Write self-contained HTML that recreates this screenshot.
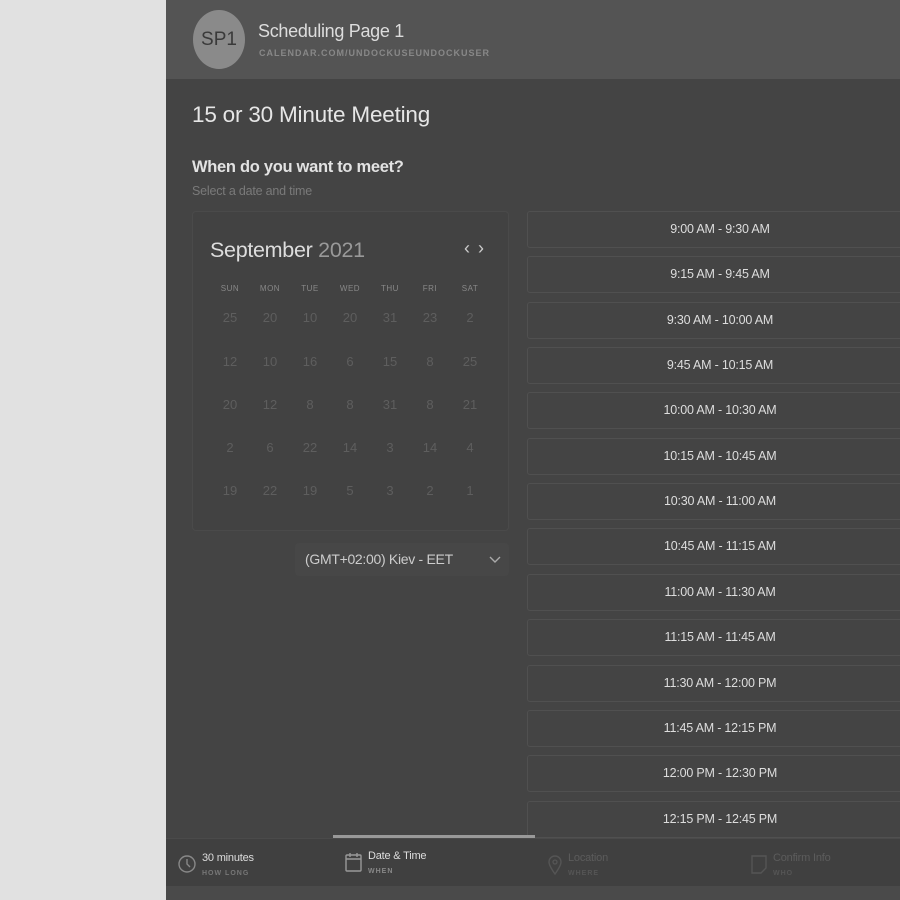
<!DOCTYPE html>
<html><head><style>
*{margin:0;padding:0;box-sizing:border-box}
body{width:900px;height:900px;overflow:hidden;background:#e1e1e1;font-family:"Liberation Sans","DejaVu Sans",sans-serif;position:relative}
#main{position:absolute;left:166px;top:0;width:734px;height:900px;background:#444;overflow:hidden}
#hdr{position:absolute;left:0;top:0;width:734px;height:79px;background:#545454}
.av{position:absolute;left:27px;top:10px;width:52px;height:59px;border-radius:50%;background:#8a8a8a;color:#3a3a3a;font-size:19px;line-height:59px;text-align:center}
.t1{position:absolute;left:92px;top:21px;color:#ddd;font-size:18px;letter-spacing:-0.3px}
.t2{position:absolute;left:93px;top:48px;color:#888;font-size:9px;letter-spacing:1px;font-weight:bold}
.h1{position:absolute;left:26px;top:102px;color:#e6e6e6;font-size:22.5px;letter-spacing:-0.2px}
.h2{position:absolute;left:26px;top:158px;color:#e2e2e2;font-size:16.5px;font-weight:bold;letter-spacing:-0.3px}
.h3{position:absolute;left:26px;top:184px;color:#7a7a7a;font-size:12.5px;letter-spacing:-0.2px}
#cal{position:absolute;left:26px;top:211px;width:317px;height:320px;background:#424242;border:1px solid #4a4a4a;border-radius:4px}
.mon{position:absolute;left:17px;top:26px;font-size:21.5px;color:#ddd;letter-spacing:-0.3px}
.mon span{color:#999}
.nav{position:absolute;right:16px;top:26px;color:#ccc;font-size:18px;letter-spacing:8px}
.grid{position:absolute;left:17px;top:72px;width:280px}
.row{display:flex}
.row div{width:40.3px;text-align:center}
.dh div{font-size:8px;color:#888;letter-spacing:.5px}
.dr{height:43px;font-size:13px;color:#5e5e5e;line-height:0;padding-top:37px}
#tz{position:absolute;left:129px;top:543px;width:214px;height:33px;background:#474747;border-radius:4px;color:#ccc;font-size:14px;line-height:33px;padding-left:10px;letter-spacing:-0.3px}
#tz svg{position:absolute;right:8px;top:13px}
.slot{position:absolute;left:361px;width:390px;height:37px;background:#444;border:1px solid #505050;border-radius:3px;color:#ddd;font-size:12.5px;text-align:center;line-height:35px;padding-right:4px;letter-spacing:-0.2px}
#bar{position:absolute;left:167px;top:835px;width:202px;height:3px;background:#999}
#foot{position:absolute;left:0;top:838px;width:734px;height:48px;background:#404040;border-top:1px solid #4a4a4a}
#strip{position:absolute;left:0;top:886px;width:734px;height:14px;background:#4a4a4a}
.fi{position:absolute;top:0}
.fi b{position:absolute;top:13px;font-weight:normal;font-size:11px;white-space:nowrap;letter-spacing:-0.2px}
.fi i{position:absolute;top:31px;font-style:normal;font-size:7px;font-weight:bold;letter-spacing:1px;white-space:nowrap}
</style></head><body>
<div id="main">
<div id="hdr"><div class="av">SP1</div><div class="t1">Scheduling Page 1</div><div class="t2">CALENDAR.COM/UNDOCKUSEUNDOCKUSER</div></div>
<div class="h1">15 or 30 Minute Meeting</div>
<div class="h2">When do you want to meet?</div>
<div class="h3">Select a date and time</div>
<div id="cal">
<div class="mon">September <span>2021</span></div>
<div class="nav">‹›</div>
<div class="grid">
<div class="row dh"><div>SUN</div><div>MON</div><div>TUE</div><div>WED</div><div>THU</div><div>FRI</div><div>SAT</div></div>
<div class="row dr" style="height:32px;padding-top:25px"><div>25</div><div>20</div><div>10</div><div>20</div><div>31</div><div>23</div><div>2</div></div>
<div class="row dr"><div>12</div><div>10</div><div>16</div><div>6</div><div>15</div><div>8</div><div>25</div></div>
<div class="row dr"><div>20</div><div>12</div><div>8</div><div>8</div><div>31</div><div>8</div><div>21</div></div>
<div class="row dr"><div>2</div><div>6</div><div>22</div><div>14</div><div>3</div><div>14</div><div>4</div></div>
<div class="row dr"><div>19</div><div>22</div><div>19</div><div>5</div><div>3</div><div>2</div><div>1</div></div>
</div></div>
<div id="tz">(GMT+02:00) Kiev - EET<svg width="12" height="8" viewBox="0 0 12 8"><path d="M1 1l5 5 5-5" stroke="#aaa" stroke-width="1.4" fill="none"/></svg></div>
<div class="slot" style="top:211px">9:00 AM - 9:30 AM</div>
<div class="slot" style="top:256px">9:15 AM - 9:45 AM</div>
<div class="slot" style="top:302px">9:30 AM - 10:00 AM</div>
<div class="slot" style="top:347px">9:45 AM - 10:15 AM</div>
<div class="slot" style="top:392px">10:00 AM - 10:30 AM</div>
<div class="slot" style="top:438px">10:15 AM - 10:45 AM</div>
<div class="slot" style="top:483px">10:30 AM - 11:00 AM</div>
<div class="slot" style="top:528px">10:45 AM - 11:15 AM</div>
<div class="slot" style="top:574px">11:00 AM - 11:30 AM</div>
<div class="slot" style="top:619px">11:15 AM - 11:45 AM</div>
<div class="slot" style="top:665px">11:30 AM - 12:00 PM</div>
<div class="slot" style="top:710px">11:45 AM - 12:15 PM</div>
<div class="slot" style="top:755px">12:00 PM - 12:30 PM</div>
<div class="slot" style="top:801px">12:15 PM - 12:45 PM</div>
<div id="bar"></div>
<div id="foot">
<div class="fi" style="left:12px"><svg style="position:absolute;top:15px" width="18" height="20" viewBox="0 0 18 20"><circle cx="9" cy="10" r="8" stroke="#888" stroke-width="1.4" fill="none"/><path d="M9 5v5l3 3" stroke="#888" stroke-width="1.4" fill="none"/></svg><b style="left:24px;color:#ddd">30 minutes</b><i style="left:24px;color:#777">HOW LONG</i></div>
<div class="fi" style="left:179px"><svg style="position:absolute;top:13px" width="17" height="20" viewBox="0 0 17 20"><rect x="1" y="3" width="15" height="16" rx="1" stroke="#999" stroke-width="1.4" fill="none"/><path d="M1 7h15M5 1v4M12 1v4" stroke="#999" stroke-width="1.4"/></svg><b style="left:23px;top:11px;color:#ddd">Date &amp; Time</b><i style="left:23px;top:29px;color:#888">WHEN</i></div>
<div class="fi" style="left:381px"><svg style="position:absolute;top:15px" width="16" height="22" viewBox="0 0 16 22"><path d="M8 20C3 13 2 10 2 8a6 6 0 0 1 12 0c0 2-1 5-6 12z" stroke="#555" stroke-width="1.4" fill="none"/><circle cx="8" cy="8" r="2" stroke="#555" stroke-width="1.3" fill="none"/></svg><b style="left:21px;color:#5c5c5c">Location</b><i style="left:21px;color:#555">WHERE</i></div>
<div class="fi" style="left:585px"><svg style="position:absolute;top:16px" width="16" height="20" viewBox="0 0 16 20"><path d="M1 1h14v12l-5 5H1z" stroke="#555" stroke-width="1.4" fill="none"/></svg><b style="left:22px;color:#5c5c5c">Confirm Info</b><i style="left:22px;color:#555">WHO</i></div>
</div>
<div id="strip"></div>
</div>
</body></html>
